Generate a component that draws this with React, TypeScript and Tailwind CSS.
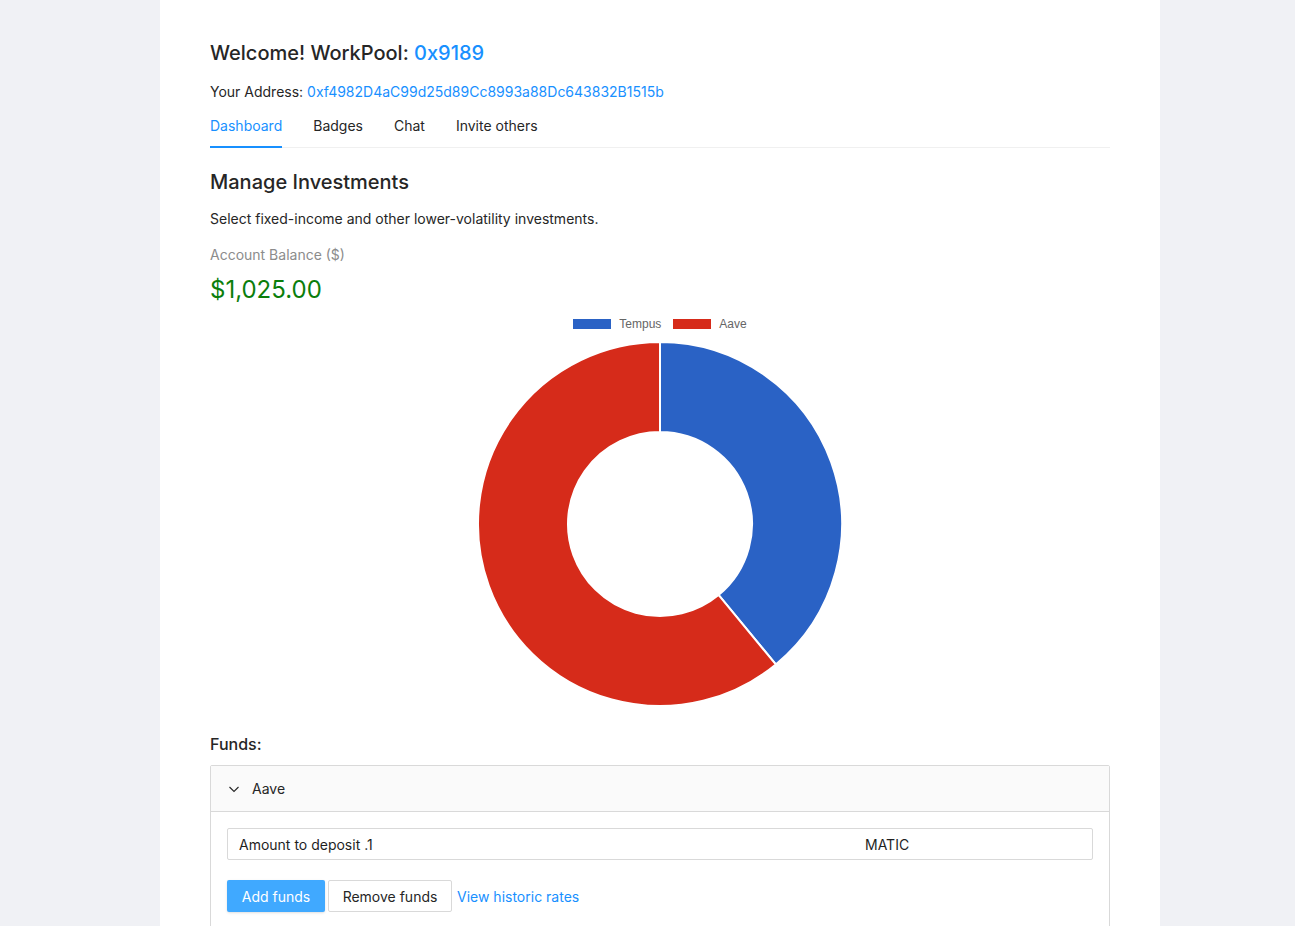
import { useState } from "react";

const BLUE = "#2a62c5";
const RED = "#d62b1a";

// donut segment path, angles measured clockwise from 12 o'clock
const arcPath = (cx: number, cy: number, R: number, r: number, a0: number, a1: number) => {
  const pt = (rad: number, a: number) => {
    const t = ((a - 90) * Math.PI) / 180;
    return [cx + rad * Math.cos(t), cy + rad * Math.sin(t)];
  };
  const large = a1 - a0 > 180 ? 1 : 0;
  const [x0, y0] = pt(R, a0);
  const [x1, y1] = pt(R, a1);
  const [x2, y2] = pt(r, a1);
  const [x3, y3] = pt(r, a0);
  return `M${x0} ${y0} A${R} ${R} 0 ${large} 1 ${x1} ${y1} L${x2} ${y2} A${r} ${r} 0 ${large} 0 ${x3} ${y3} Z`;
};

const Donut = () => {
  const tempus = 400;
  const aave = 625;
  const split = (tempus / (tempus + aave)) * 360;
  return (
    <div className="flex flex-col items-center">
      <div className="flex items-center gap-[8px] text-[12px] text-[#666] h-[14px] mt-[11px]" style={{ fontFamily: '"Liberation Sans", Arial, sans-serif' }}>
        <span className="flex items-center gap-[8px]">
          <span className="inline-block w-[38px] h-[10px]" style={{ background: BLUE }} />
          Tempus
        </span>
        <span className="flex items-center gap-[8px] ml-[4px]">
          <span className="inline-block w-[38px] h-[10px]" style={{ background: RED }} />
          Aave
        </span>
      </div>
      <svg width="368" height="368" viewBox="0 0 368 368" className="mt-[9px]">
        <path d={arcPath(184, 184, 182, 92, 0, split)} fill={BLUE} stroke="#fff" strokeWidth="2" />
        <path d={arcPath(184, 184, 182, 92, split, 360)} fill={RED} stroke="#fff" strokeWidth="2" />
      </svg>
    </div>
  );
};

const Tabs = () => {
  const [active, setActive] = useState("Dashboard");
  const tabs = ["Dashboard", "Badges", "Chat", "Invite others"];
  return (
    <div className="flex gap-[31px] border-b border-[#f0f0f0]">
      {tabs.map((t) => (
        <button
          key={t}
          onClick={() => setActive(t)}
          className={
            "pt-[12px] pb-[9px] -mb-px text-[14px] leading-[22px] border-b-2 " +
            (active === t ? "text-[#1890ff] border-[#1890ff]" : "text-[#262626] border-transparent")
          }
        >
          {t}
        </button>
      ))}
    </div>
  );
};

export default function App() {
  return (
    <div className="min-h-screen bg-[#f0f1f5] pl-[160px]" style={{ fontFamily: 'Inter, "Noto Sans", sans-serif' }}>
      <div className="w-[1000px] bg-white px-[50px] pt-[39px] pb-[40px] text-[#262626]">
        <h2 className="text-[20px] leading-[28px] font-medium">
          Welcome! WorkPool: <span className="text-[#1890ff]">0x9189</span>
        </h2>
        <div className="mt-[14px] text-[14px] leading-[22px]">
          Your Address: <span className="text-[#1890ff]">0xf4982D4aC99d25d89Cc8993a88Dc643832B1515b</span>
        </div>
        <Tabs />

        <h3 className="mt-[20px] text-[20px] leading-[28px] font-medium">Manage Investments</h3>
        <p className="mt-[12px] text-[14px] leading-[22px]">Select fixed-income and other lower-volatility investments.</p>
        <div className="mt-[14px] text-[14px] leading-[22px] text-[#8c8c8c]">Account Balance ($)</div>
        <div className="mt-[8px] text-[24px] leading-[32px] text-[#0b7e0b]">$1,025.00</div>

        <Donut />

        <div className="mt-[24px] text-[16px] leading-[24px] font-medium">Funds:</div>
        <div className="mt-[9px] border border-[#d9d9d9] rounded-[2px]">
          <div className="h-[46px] bg-[#fafafa] border-b border-[#d9d9d9] flex items-center px-[16px] text-[14px]">
            <svg width="12" height="12" viewBox="0 0 12 12" className="mr-[12px] ml-[1px]">
              <polyline points="1.5,4 6,8.5 10.5,4" fill="none" stroke="#262626" strokeWidth="1.1" />
            </svg>
            Aave
          </div>
          <div className="p-[16px] pb-[40px]">
            <div className="h-[32px] border border-[#d9d9d9] rounded-[2px] flex items-center pl-[11px] text-[14px] text-[#1f1f1f]">
              <span className="flex-1">Amount to deposit .1</span>
              <span className="w-[227px]">MATIC</span>
            </div>
            <div className="mt-[20px] flex items-center gap-[3px] text-[14px]">
              <button className="h-[32px] w-[98px] rounded-[2px] bg-[#40a9ff] text-white shadow-sm">Add funds</button>
              <button className="h-[32px] w-[124px] rounded-[2px] border border-[#d9d9d9] bg-white text-[#262626]">Remove funds</button>
              <a className="ml-[2px] text-[#1890ff] cursor-pointer">View historic rates</a>
            </div>
          </div>
        </div>
      </div>
    </div>
  );
}
